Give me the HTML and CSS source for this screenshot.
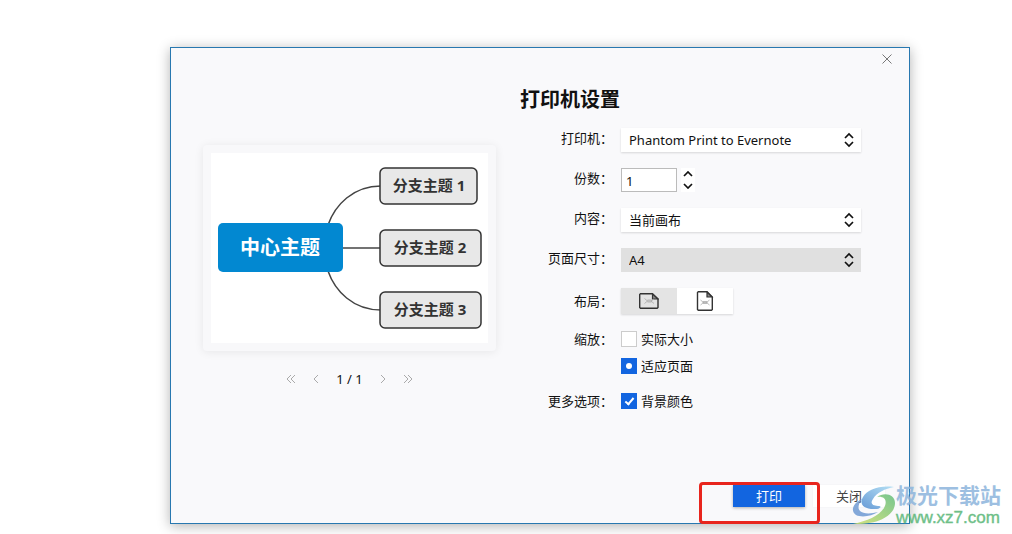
FILE: index.html
```html
<!DOCTYPE html>
<html lang="zh-CN">
<head>
<meta charset="utf-8">
<meta name="viewport" content="width=device-width, initial-scale=1">
<title>打印机设置</title>
<link rel="stylesheet" href="styles.css">
</head>
<body>
<main class="page">
  <section class="dialog" aria-labelledby="title">
    <header class="titlebar">
      <button class="icon-button" type="button" aria-label="关闭窗口">
        <svg width="10" height="10" viewBox="0 0 10 10"><path d="M.5.5l9 9M9.5.5l-9 9"/></svg>
      </button>
    </header>

    <div class="content">
      <div class="preview">
        <div class="card">
          <svg class="canvas" viewBox="0 0 277 190" role="img" aria-label="思维导图预览">
            <g class="links">
              <path d="M117 72C124 52 142 33 170 33"/>
              <path d="M131 95H170"/>
              <path d="M117 118C124 138 142 157 170 157"/>
            </g>
            <rect class="root" x="7" y="70" width="125" height="49" rx="5"/>
            <text class="root-text" x="69" y="102">中心主题</text>
            <rect class="branch" x="169" y="15" width="97" height="36" rx="5"/>
            <text class="branch-text" x="218" y="38">分支主题 1</text>
            <rect class="branch" x="169" y="77" width="101" height="36" rx="5"/>
            <text class="branch-text" x="219" y="100">分支主题 2</text>
            <rect class="branch" x="169" y="139" width="101" height="36" rx="5"/>
            <text class="branch-text" x="219" y="162">分支主题 3</text>
          </svg>
        </div>
        <nav class="pager" aria-label="翻页">
          <button class="icon-button" type="button" aria-label="首页"><svg width="10" height="10" viewBox="0 0 10 10"><path d="M5 1L1 5l4 4M9 1L5 5l4 4"/></svg></button>
          <button class="icon-button" type="button" aria-label="上一页"><svg width="10" height="10" viewBox="0 0 10 10"><path d="M7 1L3 5l4 4"/></svg></button>
          <span class="count">1 / 1</span>
          <button class="icon-button" type="button" aria-label="下一页"><svg width="10" height="10" viewBox="0 0 10 10"><path d="M3 1l4 4-4 4"/></svg></button>
          <button class="icon-button" type="button" aria-label="末页"><svg width="10" height="10" viewBox="0 0 10 10"><path d="M1 1l4 4-4 4M5 1l4 4-4 4"/></svg></button>
        </nav>
      </div>

      <form class="settings">
        <h1 class="title" id="title">打印机设置</h1>

        <div class="row">
          <label class="label" for="printer">打印机：</label>
          <div class="picker">
            <select class="select" id="printer"><option>Phantom Print to Evernote</option></select>
            <svg class="arrows" width="10" height="16" viewBox="0 0 10 16"><path d="M1 6l4-4 4 4M1 10l4 4 4-4"/></svg>
          </div>
        </div>

        <div class="row">
          <label class="label" for="copies">份数：</label>
          <div class="stepper">
            <input class="number" id="copies" type="text" inputmode="numeric" value="1">
            <div class="steps">
              <button class="step" type="button" aria-label="增加"><svg width="10" height="6" viewBox="0 0 10 6"><path d="M1 5l4-4 4 4"/></svg></button>
              <button class="step" type="button" aria-label="减少"><svg width="10" height="6" viewBox="0 0 10 6"><path d="M1 1l4 4 4-4"/></svg></button>
            </div>
          </div>
        </div>

        <div class="row">
          <label class="label" for="scope">内容：</label>
          <div class="picker">
            <select class="select" id="scope"><option>当前画布</option></select>
            <svg class="arrows" width="10" height="16" viewBox="0 0 10 16"><path d="M1 6l4-4 4 4M1 10l4 4 4-4"/></svg>
          </div>
        </div>

        <div class="row">
          <label class="label" for="size">页面尺寸：</label>
          <div class="picker">
            <select class="select select-muted" id="size"><option>A4</option></select>
            <svg class="arrows" width="10" height="16" viewBox="0 0 10 16"><path d="M1 6l4-4 4 4M1 10l4 4 4-4"/></svg>
          </div>
        </div>

        <div class="row row-centered row-layout">
          <span class="label" id="layout-label">布局：</span>
          <div class="segments" role="group" aria-labelledby="layout-label">
            <button class="segment segment-active" type="button" aria-label="横向" aria-pressed="true">
              <svg width="20" height="20" viewBox="0 0 20 20"><path class="sheet" d="M1.500 2.700H13.500L19 8V16.500L18.200 17.300H1.500L.7 16.500V3.500Z"/><path class="fold" d="M13.500 3V8H19Z"/><path class="mark" d="M5.500 7.500l3 2.500-3 2.500M15 8l-3 2 3 2.500M8 10h5M8.500 9h4M8.500 11h4"/></svg>
            </button>
            <button class="segment" type="button" aria-label="纵向" aria-pressed="false">
              <svg width="20" height="20" viewBox="0 0 20 20"><path class="sheet" d="M3.300 .7H12L17.300 6V18.500L16.500 19.300H3.300L2.500 18.500V1.500Z"/><path class="fold" d="M12 1V6H17Z"/><path class="mark" d="M5.500 9l3 2.500-3 2.500M14.500 9l-3 2.500 3 2.500M7.500 11.500h5M8 10.500h4M8 12.500h4"/></svg>
            </button>
          </div>
        </div>

        <div class="row row-centered row-scale">
          <span class="label" id="scale-label">缩放：</span>
          <label class="option"><input class="tick" type="radio" name="scale">实际大小</label>
          <label class="option option-second"><input class="tick tick-dot" type="radio" name="scale" checked>适应页面</label>
        </div>

        <div class="row row-centered row-more">
          <span class="label">更多选项：</span>
          <label class="option"><input class="tick tick-check" type="checkbox" checked>背景颜色</label>
        </div>
      </form>
    </div>

    <footer class="actions">
      <div class="highlighted">
        <button class="button button-primary" type="button">打印</button>
        <div class="highlight"></div>
      </div>
      <button class="button" type="button">关闭</button>
    </footer>

    <div class="watermark">
      <svg class="swirl" width="44" height="40" viewBox="0 0 44 40">
        <defs>
          <linearGradient id="blue" x1="0" y1="1" x2="1" y2="0"><stop offset="0" stop-color="#4f8bd0"/><stop offset="1" stop-color="#a9dcf4"/></linearGradient>
          <linearGradient id="green" x1="0" y1="1" x2="1" y2="0"><stop offset="0" stop-color="#cfe06b"/><stop offset="1" stop-color="#62bd7c"/></linearGradient>
        </defs>
        <path fill="url(#blue)" d="M42 1C27-1 15 4 11 11C7 18 11 24 25 23C29 22 30 20 26 20C20 20 18 17 21 13C25 6 33 3 42 1Z"/>
        <path fill="#6f9bd4" d="M10 13C1 17-2 25 4 29C10 32 20 30 26 26C19 28 11 28 8 25C5 22 7 17 10 13Z"/>
        <path fill="url(#green)" d="M25 11C32 6 43 8 43 17C43 29 27 39 1 38C15 35 27 30 32 22C36 15 33 10 25 11Z"/>
      </svg>
      <div class="brand">
        <span class="brand-name">极光下载站</span>
        <span class="brand-url">www.xz7.com</span>
      </div>
    </div>
  </section>
</main>
</body>
</html>
```

FILE: styles.css
```css
* {
  box-sizing: border-box;
}

body {
  margin: 0;
  background: #fff;
  color: #111;
  font: 13px/20px "Noto Sans", "Noto Sans CJK SC", sans-serif;
}

button,
input,
select {
  margin: 0;
  padding: 0;
  border: 0;
  color: inherit;
  font: inherit;
}

svg {
  display: block;
  fill: none;
}

.page {
  padding: 47px 102px 10px 170px;
}

.dialog {
  position: relative;
  border: 1px solid #2878b0;
  background: #f9f9fb;
  box-shadow: 0 2px 12px rgba(0, 0, 0, 0.3);
}

.titlebar {
  display: flex;
  justify-content: flex-end;
  padding: 6px 17px 0 0;
}

.icon-button {
  padding: 0;
  background: none;
  stroke: #aaa;
}

.titlebar .icon-button {
  stroke: #777;
}

.content {
  display: grid;
  grid-template-columns: 293px 1fr;
  gap: 24px;
  padding: 21px 48px 0 32px;
}

.preview {
  padding-top: 60px;
}

.card {
  padding: 8px;
  border-radius: 4px;
  background: #f8f8fa;
  box-shadow: 0 1px 10px rgba(0, 0, 0, 0.08);
}

.canvas {
  width: 100%;
  background: #fff;
}

.links {
  stroke: #444;
  stroke-width: 1.5;
}

.root {
  fill: #0288d1;
}

.root-text {
  fill: #fff;
  font-size: 20px;
  font-weight: 700;
  text-anchor: middle;
}

.branch {
  fill: #e8e8e8;
  stroke: #333;
  stroke-width: 1.5;
}

.branch-text {
  fill: #333;
  font-size: 15px;
  font-weight: 700;
  text-anchor: middle;
}

.pager {
  display: flex;
  align-items: center;
  justify-content: center;
  gap: 15px;
  padding-top: 18px;
}

.title {
  margin: 0;
  padding: 1px 0 14px;
  font-size: 20px;
  font-weight: 700;
  line-height: 28px;
}

.row {
  display: grid;
  grid-template-columns: 93px 1fr;
  column-gap: 8px;
  margin-bottom: 16px;
}

.row-centered {
  align-items: center;
}

.row-layout {
  margin-bottom: 15px;
}

.label {
  text-align: right;
}

.picker {
  position: relative;
}

.select {
  display: block;
  width: 100%;
  height: 24px;
  padding-left: 8px;
  border-radius: 0;
  background: #fff;
  box-shadow: 0 1px 2px rgba(0, 0, 0, 0.14);
  appearance: none;
}

.select-muted {
  background: #e0e0e0;
  box-shadow: none;
}

.arrows {
  position: absolute;
  top: 4px;
  right: 7px;
  stroke: #111;
  stroke-width: 1.7;
  pointer-events: none;
}

.stepper {
  display: flex;
  gap: 4px;
}

.number {
  width: 56px;
  height: 24px;
  padding: 2px 4px 0;
  border: 1px solid #bbb;
  background: #fff;
}

.steps {
  display: grid;
  width: 14px;
  background: #fff;
}

.step {
  display: grid;
  place-items: center;
  background: none;
  stroke: #111;
  stroke-width: 1.7;
}

.segments {
  display: flex;
  justify-self: start;
  box-shadow: 0 1px 2px rgba(0, 0, 0, 0.14);
}

.segment {
  display: grid;
  place-items: center;
  width: 56px;
  height: 26px;
  background: #fff;
}

.segment-active {
  background: #e4e4e4;
}

.sheet {
  stroke: #333;
  stroke-width: 1.4;
}

.fold {
  fill: #888;
  stroke: #333;
  stroke-width: 1.2;
}

.mark {
  stroke: #aaa;
  stroke-width: 0.8;
}

.row-scale {
  row-gap: 7px;
  margin-bottom: 15px;
}

.option {
  display: flex;
  align-items: center;
  gap: 4px;
}

.option-second {
  grid-column: 2;
}

.tick {
  display: grid;
  place-items: center;
  width: 16px;
  height: 16px;
  border: 1px solid #ccc;
  background: #fff;
  appearance: none;
}

.tick:checked {
  border-color: #1265e0;
  background: #1265e0;
}

.tick-dot::after {
  width: 6px;
  height: 6px;
  border-radius: 50%;
  background: #fff;
  content: "";
}

.tick-check::after {
  box-sizing: border-box;
  width: 5px;
  height: 9px;
  margin-bottom: 2px;
  border: solid #fff;
  border-width: 0 2px 2px 0;
  transform: rotate(40deg);
  content: "";
}

.row-more {
  margin-bottom: 0;
}

.actions {
  display: flex;
  justify-content: flex-end;
  gap: 8px;
  padding: 74px 24px 16px;
}

.button {
  display: block;
  width: 72px;
  height: 22px;
  background: #fff;
  color: #444;
  line-height: 20px;
  box-shadow: 0 0 2px rgba(0, 0, 0, 0.04);
}

.button-primary {
  background: #1265e0;
  color: #fff;
  box-shadow: 0 1px 3px rgba(0, 0, 0, 0.3);
}

.highlighted {
  position: relative;
}

.highlight {
  position: absolute;
  inset: -3px -15px -17px -34px;
  border: 3px solid #e8251d;
  border-radius: 4px;
  pointer-events: none;
}

.watermark {
  position: absolute;
  right: -92px;
  bottom: -5px;
  display: flex;
  align-items: center;
  opacity: 0.85;
  pointer-events: none;
}

.brand {
  display: grid;
  font-family: "Liberation Sans", "Noto Sans CJK SC", sans-serif;
}

.brand-name {
  color: #8db5dc;
  font-size: 21px;
  font-weight: 700;
  line-height: 24px;
}

.brand-url {
  color: #55b574;
  font-size: 17px;
  line-height: 20px;
  -webkit-text-stroke: 0.4px #55b574;
}
```
